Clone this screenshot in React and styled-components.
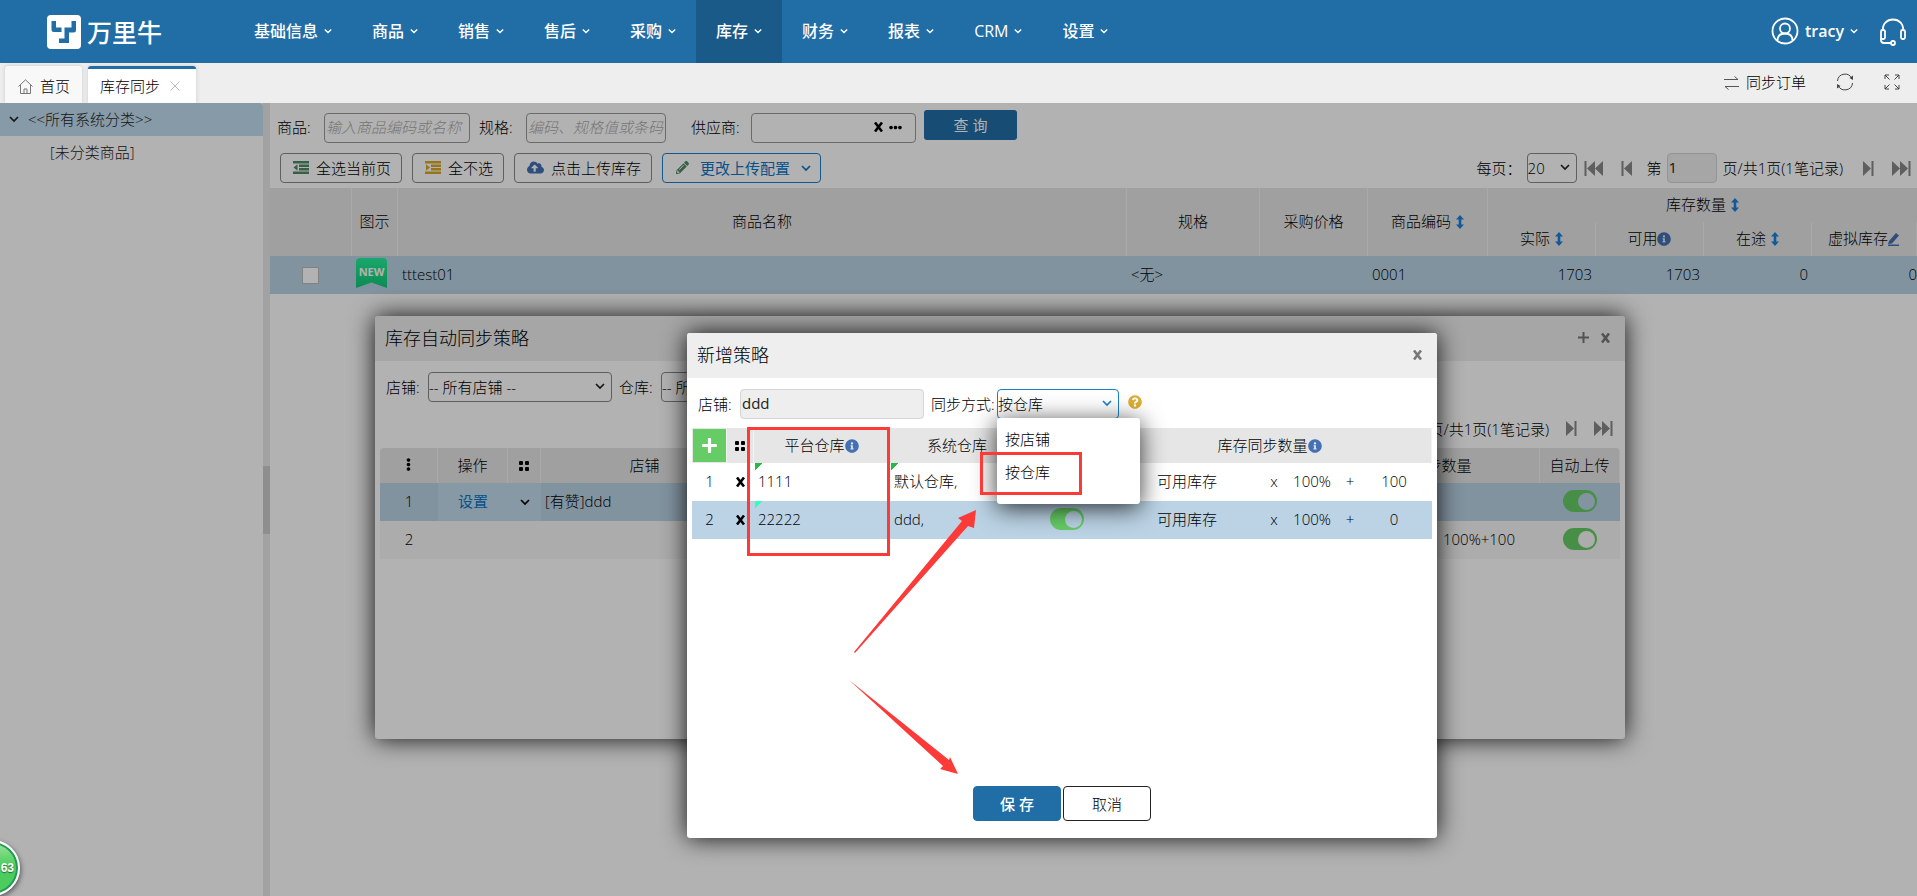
import React, { useState } from 'react';
import styled, { createGlobalStyle, css } from 'styled-components';
import { FaCloudUploadAlt, FaPencilAlt, FaInfoCircle, FaQuestionCircle, FaPlus, FaEllipsisH, FaEllipsisV } from 'react-icons/fa';

const navItems = ['基础信息', '商品', '销售', '售后', '采购', '库存', '财务', '报表', 'CRM', '设置'];

const strategies = [
	{ id: 1, platform: '1111', system: '默认仓库,', extra: '100' },
	{ id: 2, platform: '22222', system: 'ddd,', extra: '0', selected: true }
];

const Chevron = ({ size = 10 }) => (
	<svg width={size} height={size} viewBox="0 0 10 10" fill="none" stroke="currentColor" strokeWidth="1.7">
		<path d="M1 3l4 4 4-4" />
	</svg>
);

const Cross = ({ color = '#000' }) => (
	<svg width="9" height="10" viewBox="0 0 9 10" stroke={color} strokeWidth="2.6">
		<path d="M1 .5l7 9M8 .5l-7 9" />
	</svg>
);

const Step = ({ double, back }) => (
	<svg width={double ? 19 : 11} height="15" viewBox={double ? '0 0 19 15' : '0 0 11 15'} fill="currentColor">
		<g transform={back ? `translate(${double ? 19 : 11} 0) scale(-1 1)` : undefined}>
			<path d={double ? 'M0 0l8 7.5L0 15zM8 0l8 7.5L8 15zM16.5 0H18.5v15h-2z' : 'M0 0l8 7.5L0 15zM8.5 0h2v15h-2z'} />
		</g>
	</svg>
);

const Grip = () => (
	<svg width="10" height="10" viewBox="0 0 10 10" fill="currentColor">
		<rect width="4" height="4" rx="1" />
		<rect x="6" width="4" height="4" rx="1" />
		<rect y="6" width="4" height="4" rx="1" />
		<rect x="6" y="6" width="4" height="4" rx="1" />
	</svg>
);

const Lines = ({ color, indent }) => (
	<svg width="16" height="13" viewBox="0 0 16 13" fill={color}>
		<path d="M0 0h16v2.400H0zM6 3.500h10v2.400H6zM6 7h10v2.400H6zM0 10.600h16V13H0z" />
		<path d={indent ? 'M1 3.300l4 3.200-4 3.200z' : 'M4.500 3.300v6.400L.5 6.500z'} />
	</svg>
);

const Sort = () => (
	<SortIcon width="8" height="14" viewBox="0 0 8 14">
		<path d="M4 0l4 4.500H5.300v5H8L4 14 0 9.500h2.700v-5H0z" />
	</SortIcon>
);

const Header = () => (
	<HeaderBar>
		<Logo href="#">
			<svg width="34" height="34" viewBox="0 0 34 34">
				<rect width="34" height="34" rx="4" fill="#fff" />
				<path d="M4.500 6H9v6.500h5.500V17H7q-2.500 0-2.500-2.500zM24.500 6H29v9q0 2.500-2.500 2.500H22V28H12v-4.500h5.500v-11h7z" fill="#216da6" />
			</svg>
			<span>万里牛</span>
		</Logo>
		<Nav>
			{navItems.map((item) => (
				<NavLink key={item} href="#" $active={item === '库存'}>
					{item}
					<Chevron size={8} />
				</NavLink>
			))}
		</Nav>
		<User>
			<svg width="28" height="28" viewBox="0 0 28 28" fill="none" stroke="currentColor" strokeWidth="1.8">
				<circle cx="14" cy="14" r="12.500" />
				<circle cx="14" cy="11.500" r="5" />
				<path d="M6.500 23.500c0-4.500 3-7 7.500-7s7.500 2.500 7.500 7" />
			</svg>
			tracy
			<Chevron size={8} />
		</User>
		<IconButton aria-label="客服">
			<svg width="28" height="28" viewBox="0 0 28 28" fill="none" stroke="currentColor" strokeWidth="1.8">
				<path d="M4 13C3 6 8 1.500 14 1.500S25 6 24 13" />
				<rect x="2" y="12" width="4" height="9" rx="1.500" />
				<rect x="22" y="12" width="4" height="9" rx="1.500" />
				<path d="M2 20v2q0 3 3 3h7" />
				<circle cx="14" cy="25" r="2" />
			</svg>
		</IconButton>
	</HeaderBar>
);

const Tabs = () => (
	<TabBar>
		<Tab href="#">
			<svg width="15" height="15" viewBox="0 0 15 15" fill="none" stroke="#777">
				<path d="M.5 7.500L7.500.8l7 6.700M2.500 6v8.500h10V6M6 14.500v-4.500h3v4.500" />
			</svg>
			首页
		</Tab>
		<Tab href="#" $active>
			库存同步
			<svg width="10" height="10" viewBox="0 0 10 10" stroke="#bbb">
				<path d="M.5.5l9 9M9.500.5l-9 9" />
			</svg>
		</Tab>
		<TabTools>
			<ToolLink href="#">
				<svg width="15" height="15" viewBox="0 0 15 15" fill="none" stroke="#555">
					<path d="M0 4.500h14l-3.500-3M15 11.500H1l3.500 3" />
				</svg>
				同步订单
			</ToolLink>
			<IconButton aria-label="刷新">
				<svg width="18" height="18" viewBox="0 0 18 18" fill="none" stroke="#444">
					<path d="M1.500 8A7.500 7.500 0 0 1 16 6M16.500 10A7.500 7.500 0 0 1 2 12" />
					<path d="M17 2.500V7l-3.500-2zM1 15.500V11l3.500 2z" fill="#444" stroke="none" />
				</svg>
			</IconButton>
			<IconButton aria-label="全屏">
				<svg width="16" height="16" viewBox="0 0 16 16" fill="none" stroke="#444">
					<path d="M5.500 5.500L1 1M1 5V1h4M10.500 5.500L15 1M11 1h4v4M5.500 10.500L1 15M1 11v4h4M10.500 10.500L15 15M15 11v4h-4" />
				</svg>
			</IconButton>
		</TabTools>
	</TabBar>
);

const ProductTable = () => (
	<Table>
		<colgroup>
			<col width="82" />
			<col width="46" />
			<col />
			<col width="133" />
			<col width="108" />
			<col width="120" />
			<col width="108" />
			<col width="108" />
			<col width="108" />
			<col width="105" />
		</colgroup>
		<thead>
			<HeadRow $height={34}>
				<th rowSpan="2" />
				<th rowSpan="2">图示</th>
				<th rowSpan="2">商品名称</th>
				<th rowSpan="2">规格</th>
				<th rowSpan="2">采购价格</th>
				<th rowSpan="2">
					商品编码
					<Sort />
				</th>
				<th colSpan="4">
					库存数量
					<Sort />
				</th>
			</HeadRow>
			<HeadRow $height={34}>
				<th>
					实际
					<Sort />
				</th>
				<th>
					可用
					<InfoIcon />
				</th>
				<th>
					在途
					<Sort />
				</th>
				<th>
					虚拟库存
					<EditIcon width="12" height="14" viewBox="0 0 12 14">
						<path d="M0 12.500h11V14H0zM1 9l7-8 3 2.500-7 8L0 12z" />
					</EditIcon>
				</th>
			</HeadRow>
		</thead>
		<tbody>
			<Row $selected>
				<td className="center">
					<CheckBox type="checkbox" aria-label="选择 tttest01" />
				</td>
				<td className="flush">
					<NewBadge>NEW</NewBadge>
				</td>
				<td>tttest01</td>
				<td>&lt;无&gt;</td>
				<td />
				<td>0001</td>
				<td className="right">1703</td>
				<td className="right">1703</td>
				<td className="right">0</td>
				<td className="right last">0</td>
			</Row>
		</tbody>
	</Table>
);

const StrategyWindow = () => (
	<Window $left={375} $top={213} $width={1250} $height={423}>
		<WindowHead>
			<h2>库存自动同步策略</h2>
			<IconButton aria-label="新增">
				<svg width="11" height="11" viewBox="0 0 11 11" stroke="#777" strokeWidth="2">
					<path d="M5.500 0v11M0 5.500h11" />
				</svg>
			</IconButton>
			<IconButton aria-label="关闭">
				<Cross color="#777" />
			</IconButton>
		</WindowHead>
		<Filters>
			<label htmlFor="all-shop">店铺:</label>
			<SelectBox $width={184}>
				<select id="all-shop">
					<option>-- 所有店铺 --</option>
				</select>
				<Chevron />
			</SelectBox>
			<label htmlFor="all-warehouse">仓库:</label>
			<SelectBox $width={184}>
				<select id="all-warehouse">
					<option>-- 所有仓库 --</option>
				</select>
				<Chevron />
			</SelectBox>
		</Filters>
		<WindowPager>
			<span>页/共1页(1笔记录)</span>
			<PageButton aria-label="下一页">
				<Step />
			</PageButton>
			<PageButton aria-label="末页">
				<Step double />
			</PageButton>
		</WindowPager>
		<WindowBody>
			<Table $rounded>
				<colgroup>
					<col width="58" />
					<col width="70" />
					<col width="33" />
					<col width="208" />
					<col />
					<col width="226" />
					<col width="80" />
				</colgroup>
				<thead>
					<HeadRow $height={35}>
						<th>
							<FaEllipsisV size={13} />
						</th>
						<th>操作</th>
						<th>
							<Grip />
						</th>
						<th>店铺</th>
						<th />
						<th>库存同步数量</th>
						<th>自动上传</th>
					</HeadRow>
				</thead>
				<tbody>
					<Row $selected>
						<td className="center">1</td>
						<td className="center light">
							<TextLink href="#">设置</TextLink>
						</td>
						<td className="center light">
							<Chevron />
						</td>
						<td>[有赞]ddd</td>
						<td />
						<td />
						<td className="center">
							<Toggle type="checkbox" defaultChecked $knob="#bcd5e6" aria-label="自动上传 1" />
						</td>
					</Row>
					<Row $even>
						<td className="center">2</td>
						<td />
						<td />
						<td />
						<td />
						<td className="right inset">100%+100</td>
						<td className="center">
							<Toggle type="checkbox" defaultChecked $knob="#f6f6f6" aria-label="自动上传 2" />
						</td>
					</Row>
				</tbody>
			</Table>
		</WindowBody>
	</Window>
);

const AddStrategyWindow = () => {
	const [mode, setMode] = useState('按仓库');
	return (
		<Window $left={687} $top={333} $width={750} $height={505}>
			<WindowHead>
				<h2>新增策略</h2>
				<IconButton aria-label="关闭">
					<Cross color="#777" />
				</IconButton>
			</WindowHead>
			<Filters>
				<label htmlFor="shop">店铺:</label>
				<Input id="shop" $width={184} defaultValue="ddd" disabled />
				<ModeField>
					<label htmlFor="mode">同步方式:</label>
					<SelectBox $width={122} $focus>
						<select id="mode" value={mode} onChange={(e) => setMode(e.target.value)}>
							<option>按店铺</option>
							<option>按仓库</option>
						</select>
						<Chevron />
						<Menu>
							{['按店铺', '按仓库'].map((item) => (
								<li key={item} onClick={() => setMode(item)}>
									{item}
								</li>
							))}
						</Menu>
					</SelectBox>
				</ModeField>
				<HelpIcon />
			</Filters>
			<WindowBody>
				<Table>
					<colgroup>
						<col width="35" />
						<col width="27" />
						<col width="136" />
						<col width="135" />
						<col width="83" />
						<col />
					</colgroup>
					<thead>
						<HeadRow $height={35}>
							<th className="flush">
								<AddButton aria-label="新增">
									<FaPlus size={17} />
								</AddButton>
							</th>
							<th>
								<Grip />
							</th>
							<th>
								平台仓库
								<InfoIcon />
							</th>
							<th>系统仓库</th>
							<th />
							<th>
								库存同步数量
								<InfoIcon />
							</th>
						</HeadRow>
					</thead>
					<tbody>
						{strategies.map((row) => (
							<Row key={row.id} $selected={row.selected}>
								<td className="center">{row.id}</td>
								<td className="center">
									<IconButton aria-label="删除">
										<Cross />
									</IconButton>
								</td>
								<EditedCell $color={row.selected ? '#3fb' : '#2b4'}>{row.platform}</EditedCell>
								<EditedCell $color={row.selected ? 'transparent' : '#2b4'}>{row.system}</EditedCell>
								<td className="center">
									<Toggle type="checkbox" defaultChecked $knob={row.selected ? '#bbd3e5' : '#fff'} aria-label={`自动上传 ${row.platform}`} />
								</td>
								<td className="formula">
									<Formula>
										<span>可用库存</span>
										<span>x</span>
										<span>100%</span>
										<span>+</span>
										<span>{row.extra}</span>
									</Formula>
								</td>
							</Row>
						))}
					</tbody>
				</Table>
			</WindowBody>
			<WindowFoot>
				<ActionButton $primary>保 存</ActionButton>
				<ActionButton>取消</ActionButton>
			</WindowFoot>
			{/* hand drawn guide marks */}
			<Marks width="750" height="505" viewBox="687 333 750 505">
				<rect x="748.500" y="428.500" width="140" height="126" />
				<rect x="981.500" y="453.500" width="99" height="40" />
				<path d="M854 652L962 521l-4-3 18-8-2 18-6-2L855 653z" />
				<path d="M849 680l100 80 1-3 8 17-18-5 3-3z" />
			</Marks>
		</Window>
	);
};

const App = () => {
	return (
		<Page>
			<GlobalStyle />
			<Header />
			<Tabs />
			<Workspace>
				<Sidebar>
					<TreeItem href="#" $active>
						<Chevron />
						&lt;&lt;所有系统分类&gt;&gt;
					</TreeItem>
					<TreeItem href="#" $child>
						[未分类商品]
					</TreeItem>
				</Sidebar>
				<Splitter />
				<Main>
					<SearchRow>
						<label htmlFor="goods">商品:</label>
						<Input id="goods" $width={146} placeholder="输入商品编码或名称" />
						<label htmlFor="spec">规格:</label>
						<Input id="spec" $width={140} placeholder="编码、规格值或条码" />
						<label htmlFor="supplier" className="wide">
							供应商:
						</label>
						<SupplierBox>
							<input id="supplier" />
							<Cross />
							<FaEllipsisH size={13} />
						</SupplierBox>
						<QueryButton>查 询</QueryButton>
					</SearchRow>
					<Toolbar>
						<ToolButton>
							<Lines color="#4f8a62" />
							全选当前页
						</ToolButton>
						<ToolButton>
							<Lines color="#d9a928" indent />
							全不选
						</ToolButton>
						<ToolButton>
							<FaCloudUploadAlt size={17} color="#4470b4" />
							点击上传库存
						</ToolButton>
						<ToolButton $blue>
							<FaPencilAlt size={13} color="#4f8a62" />
							更改上传配置
							<Chevron />
						</ToolButton>
						<Pager>
							<label htmlFor="size">每页：</label>
							<SelectBox $width={50}>
								<select id="size">
									<option>20</option>
								</select>
								<Chevron />
							</SelectBox>
							<PageButton aria-label="首页">
								<Step double back />
							</PageButton>
							<PageButton aria-label="上一页">
								<Step back />
							</PageButton>
							<label htmlFor="page">第</label>
							<Input id="page" $width={50} defaultValue="1" disabled />
							<span>页/共1页(1笔记录)</span>
							<PageButton aria-label="下一页">
								<Step />
							</PageButton>
							<PageButton aria-label="末页">
								<Step double />
							</PageButton>
						</Pager>
					</Toolbar>
					<ProductTable />
				</Main>
				<StrategyWindow />
				<Mask />
			</Workspace>
			<AddStrategyWindow />
			<Bubble>63</Bubble>
		</Page>
	);
};

const GlobalStyle = createGlobalStyle`
	* {
		box-sizing: border-box;
	}
	body {
		margin: 0;
		overflow: hidden;
	}
	body, button, input, select {
		font: 300 15px/20px 'Open Sans', 'Noto Sans CJK SC', sans-serif;
		color: #000;
	}
	a {
		color: inherit;
		text-decoration: none;
	}
	svg {
		flex: none;
	}
`;

const InfoIcon = styled(FaInfoCircle).attrs({ size: 14, color: '#4470b4' })`
	vertical-align: -2px;
`;

const EditIcon = styled.svg`
	fill: #4470b4;
	vertical-align: -2px;
`;

const SortIcon = styled.svg`
	margin-left: 5px;
	fill: #1a80dd;
	vertical-align: -2px;
`;

const HelpIcon = styled(FaQuestionCircle).attrs({ size: 14, color: '#dbaf33' })`
	margin: 0 0 4px 2px;
`;

const Page = styled.div`
	position: relative;
	display: flex;
	flex-direction: column;
	min-height: 100vh;
	overflow: hidden;
`;

const HeaderBar = styled.header`
	display: flex;
	align-items: center;
	height: 63px;
	padding-right: 10px;
	background: #216da6;
	color: #fff;
`;

const Logo = styled.a`
	display: flex;
	align-items: center;
	gap: 6px;
	width: 187px;
	margin-left: 47px;
	font-size: 25px;
	font-weight: 500;
	line-height: 32px;
`;

const Nav = styled.nav`
	display: flex;
	align-self: stretch;
	flex: 1;
`;

const NavLink = styled.a`
	display: flex;
	align-items: center;
	gap: 6px;
	padding: 0 20px 2px;
	font-size: 16px;
	font-weight: 500;
	background: ${(props) => (props.$active ? '#1a5a88' : 'transparent')};
`;

const IconButton = styled.button`
	display: inline-flex;
	padding: 0;
	border: 0;
	background: none;
	color: inherit;
	cursor: pointer;
`;

const User = styled.div`
	display: flex;
	align-items: center;
	gap: 6px;
	margin-right: 21px;
	padding-bottom: 2px;
	font-size: 16px;
	font-weight: 600;
`;

const TabBar = styled.div`
	display: flex;
	align-items: flex-end;
	gap: 6px;
	height: 40px;
	padding-left: 5px;
	background: #eee;
`;

const Tab = styled.a`
	display: flex;
	align-items: center;
	gap: ${(props) => (props.$active ? '10px' : '7px')};
	height: 37px;
	padding: ${(props) => (props.$active ? '0 16px 0 12px' : '3px 12px 0 13px')};
	border-top: ${(props) => (props.$active ? '3px solid #216da6' : '0')};
	border-radius: 3px 3px 0 0;
	background: ${(props) => (props.$active ? '#fff' : '#f8f8f8')};
	box-shadow: 0 0 4px rgba(0, 0, 0, 0.15);
`;

const TabTools = styled.div`
	display: flex;
	align-items: center;
	align-self: stretch;
	gap: 30px;
	margin-left: auto;
	padding: 0 17px 2px 0;
`;

const ToolLink = styled.a`
	display: flex;
	align-items: center;
	gap: 7px;
`;

const Workspace = styled.div`
	position: relative;
	display: flex;
	flex: 1;
`;

const Sidebar = styled.aside`
	width: 263px;
`;

const TreeItem = styled.a`
	display: flex;
	align-items: center;
	gap: 9px;
	height: 33px;
	padding: 0 0 2px ${(props) => (props.$child ? '50px' : '9px')};
	border-radius: 0 4px 0 0;
	background: ${(props) => (props.$active ? '#c0ddef' : 'transparent')};
	color: #222;
`;

const Splitter = styled.div`
	display: flex;
	align-items: center;
	width: 7px;
	background: #e9e9e9;
	&::before {
		content: '';
		width: 7px;
		height: 68px;
		background: #ccc;
	}
`;

const Main = styled.main`
	flex: 1;
	min-width: 0;
`;

const SearchRow = styled.div`
	display: flex;
	align-items: center;
	height: 50px;
	padding: 0 7px;
	label {
		width: 47px;
		padding-bottom: 2px;
	}
	label + input {
		margin-right: 9px;
	}
	.wide {
		width: 60px;
		margin-left: 16px;
	}
`;

const Input = styled.input`
	width: ${(props) => props.$width}px;
	height: 30px;
	padding: 0 1px 2px;
	border: 1px solid #999;
	border-radius: 4px;
	background: #fff;
	&::placeholder {
		color: #aaa;
		font-style: italic;
	}
	&:disabled {
		border-color: #d5d5d5;
		background: #eee;
		color: #222;
		font-weight: 400;
	}
`;

const SupplierBox = styled.div`
	display: flex;
	align-items: center;
	gap: 6px;
	width: 165px;
	height: 30px;
	padding: 0 13px 2px 0;
	border: 1px solid #999;
	border-radius: 4px;
	input {
		flex: 1;
		min-width: 0;
		border: 0;
		background: none;
	}
`;

const QueryButton = styled.button`
	align-self: flex-start;
	width: 93px;
	height: 30px;
	margin: 7px 0 0 8px;
	padding-bottom: 2px;
	border: 0;
	border-radius: 3px;
	background: #216da6;
	color: #fff;
	font-weight: 400;
`;

const Toolbar = styled.div`
	display: flex;
	align-items: center;
	gap: 10px;
	height: 30px;
	margin-bottom: 5px;
	padding: 0 6px 0 10px;
`;

const ToolButton = styled.button`
	display: flex;
	align-items: center;
	gap: 7px;
	height: 30px;
	padding: 0 10px 1px 12px;
	border: 1px solid ${(props) => (props.$blue ? '#1a80cc' : '#888')};
	border-radius: 4px;
	background: none;
	color: ${(props) => (props.$blue ? '#0c74c4' : '#000')};
	${(props) =>
		props.$blue &&
		css`
			gap: 11px;
			padding-left: 13px;
			padding-right: 9px;
			font-weight: 400;
		`}
`;

const SelectBox = styled.div`
	position: relative;
	width: ${(props) => props.$width}px;
	select {
		display: block;
		width: 100%;
		height: 30px;
		padding: 0;
		border: 1px solid ${(props) => (props.$focus ? '#1a80cc' : '#888')};
		border-radius: 4px;
		background: none;
		appearance: none;
	}
	> svg {
		position: absolute;
		right: 7px;
		top: 9px;
		color: ${(props) => (props.$focus ? '#1a80cc' : '#222')};
		pointer-events: none;
	}
`;

const Menu = styled.ul`
	position: absolute;
	z-index: 1;
	top: 29px;
	left: 0;
	width: 143px;
	margin: 0;
	padding: 5px 0 15px;
	border-radius: 3px;
	background: #fff;
	box-shadow: 0 4px 24px rgba(0, 0, 0, 0.8);
	list-style: none;
	li {
		padding: 0 8px;
		line-height: 33px;
		cursor: pointer;
	}
`;

const PageButton = styled(IconButton)`
	color: #888;
`;

const Pager = styled.div`
	display: flex;
	align-items: center;
	margin-left: auto;
	> label:first-child {
		width: 50px;
	}
	> button {
		margin: 0 11px 0 7px;
	}
	> button + label {
		margin-left: 4px;
	}
	> input {
		margin: 0 6px 0 5px;
	}
	> button:last-child {
		margin-right: 0;
	}
	> span + button {
		margin-left: 20px;
	}
`;

const Table = styled.table`
	width: 100%;
	border-collapse: separate;
	border-spacing: 0;
	table-layout: fixed;
	border-radius: ${(props) => (props.$rounded ? '4px 4px 0 0' : '0')};
	overflow: hidden;
	th {
		padding: 0 0 2px;
		border-right: 1px solid #f2f2f2;
		background: #e6e6e6;
		font-weight: inherit;
	}
	th[colspan] {
		border-right: 0;
	}
	td {
		padding: 0 4px 2px;
	}
	.center {
		text-align: center;
	}
	.right {
		text-align: right;
	}
	.last {
		padding-right: 0;
	}
	.flush {
		padding: 0;
	}
	.formula {
		padding: 0 0 2px;
	}
	.inset {
		padding-right: 25px;
	}
	.light {
		background: #c2dbec;
	}
`;

const HeadRow = styled.tr`
	height: ${(props) => props.$height}px;
`;

const Row = styled.tr`
	height: 38px;
	background: ${(props) => (props.$selected ? '#bbd3e5' : props.$even ? '#f6f6f6' : 'transparent')};
`;

const CheckBox = styled.input`
	display: inline-block;
	width: 17px;
	height: 17px;
	margin: 0 2px 0 0;
	border: 1px solid #bbb;
	background: #fff;
	vertical-align: middle;
	appearance: none;
`;

const NewBadge = styled.div`
	width: 31px;
	height: 30px;
	margin: 0 4px 4px;
	background: linear-gradient(#25f09a, #12c878);
	border-radius: 4px 4px 0 0;
	clip-path: polygon(0 0, 100% 0, 100% 100%, 50% 82%, 0 100%);
	color: #fff;
	font-size: 11px;
	font-weight: 700;
	line-height: 28px;
	text-align: center;
`;

const Window = styled.section`
	position: absolute;
	left: ${(props) => props.$left}px;
	top: ${(props) => props.$top}px;
	display: flex;
	flex-direction: column;
	width: ${(props) => props.$width}px;
	height: ${(props) => props.$height}px;
	border-radius: 3px;
	background: #fff;
	box-shadow: 0 0 24px rgba(0, 0, 0, 0.9);
`;

const WindowHead = styled.div`
	display: flex;
	align-items: center;
	gap: 12px;
	height: 45px;
	padding: 0 15px 2px 10px;
	border-radius: 3px 3px 0 0;
	background: #eee;
	h2 {
		flex: 1;
		margin: 0;
		font-size: 18px;
		font-weight: inherit;
		line-height: 24px;
	}
`;

const Filters = styled.div`
	display: flex;
	align-items: center;
	gap: 7px;
	height: 50px;
	padding: 2px 11px 0;
	label {
		width: 35px;
	}
`;

const ModeField = styled.div`
	display: flex;
	align-items: center;
	label {
		width: 66px;
		white-space: nowrap;
	}
`;

const WindowPager = styled.div`
	display: flex;
	align-items: center;
	justify-content: flex-end;
	gap: 17px;
	height: 37px;
	padding: 0 12px 2px;
`;

const WindowBody = styled.div`
	flex: 1;
	padding: 0 5px;
`;

const TextLink = styled.a`
	color: #0c74c4;
	font-weight: 400;
`;

const Toggle = styled.input`
	display: inline-flex;
	align-items: center;
	justify-content: flex-end;
	width: 34px;
	height: 22px;
	margin: 0;
	padding-right: 2px;
	border-radius: 11px;
	background: #6c6;
	vertical-align: middle;
	appearance: none;
	&::before {
		content: '';
		width: 17px;
		height: 17px;
		border-radius: 50%;
		background: ${(props) => props.$knob};
	}
`;

const AddButton = styled.button`
	display: flex;
	align-items: center;
	justify-content: center;
	width: 33px;
	height: 33px;
	padding: 0;
	margin: 0 auto;
	border: 0;
	background: #6c6;
	color: #fff;
`;

const EditedCell = styled.td`
	background: linear-gradient(135deg, ${(props) => props.$color} 5px, transparent 5px) no-repeat 1px 0;
`;

const Formula = styled.div`
	display: grid;
	grid-template-columns: 98px 38px 38px 38px 50px;
	padding-left: 49px;
	text-align: center;
	span:first-child {
		text-align: left;
	}
`;

const WindowFoot = styled.div`
	display: flex;
	justify-content: center;
	gap: 2px;
	padding-bottom: 17px;
`;

const ActionButton = styled.button`
	width: 88px;
	height: 35px;
	border: 1px solid ${(props) => (props.$primary ? '#216da6' : '#222')};
	border-radius: 4px;
	background: ${(props) => (props.$primary ? '#216da6' : '#fff')};
	color: ${(props) => (props.$primary ? '#fff' : '#000')};
	font-weight: ${(props) => (props.$primary ? 500 : 300)};
`;

const Marks = styled.svg`
	position: absolute;
	z-index: 2;
	inset: 0;
	pointer-events: none;
	rect {
		fill: none;
		stroke: #fc3a38;
		stroke-width: 3;
	}
	path {
		fill: #fc3a38;
	}
`;

const Mask = styled.div`
	position: absolute;
	inset: 0;
	background: rgba(0, 0, 0, 0.3);
`;

const Bubble = styled.div`
	position: absolute;
	left: -36px;
	bottom: 0;
	width: 56px;
	height: 56px;
	padding-right: 4px;
	border: 2px solid #fff;
	border-radius: 50%;
	background: linear-gradient(#9fe49f, #4ccc5c 45%);
	box-shadow: inset 0 0 0 2px #1f9a5a, 1px 2px 5px rgba(0, 0, 0, 0.5);
	color: #fff;
	font: 700 12px/52px 'Liberation Sans', sans-serif;
	text-align: right;
	text-shadow: 0 1px 1px #264;
`;

export default App;
